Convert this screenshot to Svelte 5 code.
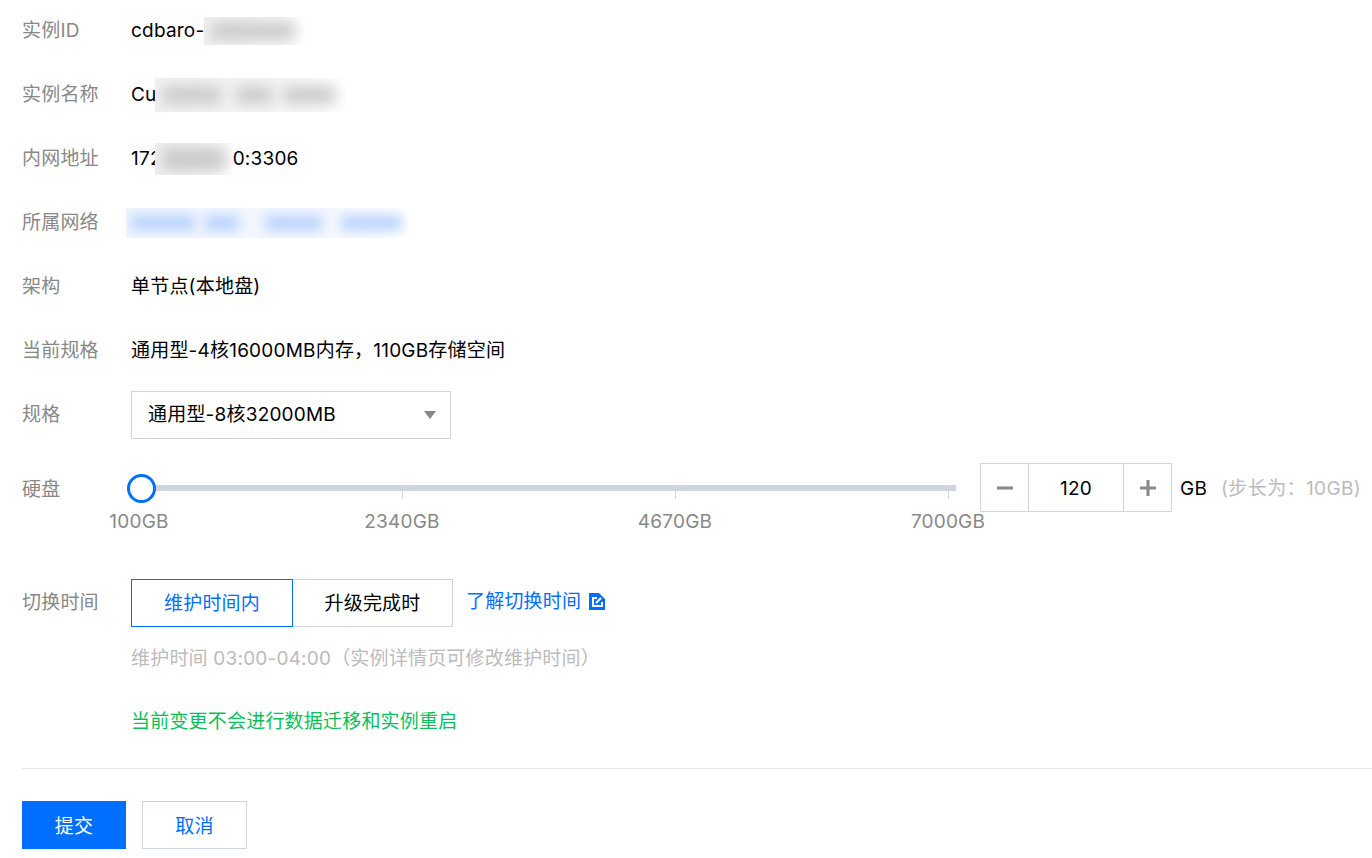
<script>
  let disk = $state(120);
  let when = $state('window');
  const marks = ['100GB', '2340GB', '4670GB', '7000GB'];
</script>

<div class="page">
  <div class="rows">
    <div class="row">
      <span class="label">实例ID</span>
      <span class="value">cdbaro-<span class="redact r-id"><i></i></span></span>
    </div>
    <div class="row">
      <span class="label">实例名称</span>
      <span class="value">Cu<span class="redact r-name"><i></i><i></i><i></i></span></span>
    </div>
    <div class="row">
      <span class="label">内网地址</span>
      <span class="value">172<span class="redact r-ip"><i></i></span>0:3306</span>
    </div>
    <div class="row">
      <span class="label">所属网络</span>
      <span class="value"><span class="redact r-net"><i></i><i></i><i></i><i></i></span></span>
    </div>
    <div class="row">
      <span class="label">架构</span>
      <span class="value">单节点(本地盘)</span>
    </div>
    <div class="row">
      <span class="label">当前规格</span>
      <span class="value">通用型-4核16000MB内存，110GB存储空间</span>
    </div>
  </div>

  <div class="row spec">
    <span class="label">规格</span>
    <div class="select">
      <span>通用型-8核32000MB</span>
      <span class="caret"></span>
    </div>
  </div>

  <div class="row disk">
    <span class="label">硬盘</span>
    <div class="slider">
      <div class="track">
        <span class="thumb"></span>
        <span class="tick"></span>
        <span class="tick"></span>
        <span class="tick"></span>
      </div>
      <div class="marks">
        {#each marks as m}
          <span class="mark"><span>{m}</span></span>
        {/each}
      </div>
    </div>
    <div class="stepper">
      <button class="step" aria-label="减少" onclick={() => (disk -= 10)}>
        <svg width="18" height="18" viewBox="0 0 18 18"><rect x="1" y="7.5" width="16" height="3" fill="#888" /></svg>
      </button>
      <span class="num">{disk}</span>
      <button class="step" aria-label="增加" onclick={() => (disk += 10)}>
        <svg width="18" height="18" viewBox="0 0 18 18"><path d="M1 7.5h6.5V1h3v6.5H17v3h-6.5V17h-3v-6.5H1z" fill="#888" /></svg>
      </button>
    </div>
    <span class="unit">GB</span>
    <span class="step-hint">(步长为：10GB)</span>
  </div>

  <div class="row switch">
    <span class="label">切换时间</span>
    <div class="seg">
      <button class:on={when === 'window'} onclick={() => (when = 'window')}>维护时间内</button>
      <button class:on={when === 'done'} onclick={() => (when = 'done')}>升级完成时</button>
    </div>
    <a class="link" href="#switch">了解切换时间
      <svg width="16" height="17" viewBox="0 0 16 17">
        <path d="M0 0h16v17H0z" fill="#006eff" />
        <path d="M8 5H4v8h9V9" fill="none" stroke="#fff" stroke-width="2" />
        <path d="M7 10 12 5" fill="none" stroke="#fff" stroke-width="2.2" />
        <path d="M10 0h6v6z" fill="#fff" />
      </svg>
    </a>
  </div>
  <p class="hint">维护时间 03:00-04:00（实例详情页可修改维护时间）</p>
  <p class="ok">当前变更不会进行数据迁移和实例重启</p>

  <div class="footer">
    <button class="btn primary">提交</button>
    <button class="btn">取消</button>
  </div>
</div>

<style>
  :global(body) {
    background: #fff;
    overflow: hidden;
  }

  .page {
    height: 858px;
    box-sizing: border-box;
    padding: 17px 0 0 22px;
    font-family: Inter, "Noto Sans CJK SC", sans-serif;
    font-size: 19px;
    line-height: 28px;
    letter-spacing: 0.2px;
    color: #000;
  }

  .rows {
    display: flex;
    flex-direction: column;
    gap: 36px;
  }

  .row {
    display: flex;
    align-items: center;
  }

  .label {
    flex: none;
    width: 109px;
    color: #888;
  }

  .value {
    display: flex;
    align-items: center;
    height: 28px;
    white-space: nowrap;
  }

  .redact {
    display: flex;
    align-items: center;
    overflow: hidden;
    background: linear-gradient(90deg, #f1f1f1, #f6f6f6 60%, #fff);
    flex: none;
    box-sizing: border-box;
  }

  .redact i {
    display: block;
    height: 18px;
    background: #cbcbcb;
    filter: blur(7px);
    flex: none;
  }

  .r-id {
    width: 101px;
    height: 28px;
    padding-left: 7px;
  }
  .r-id i { width: 84px; }

  .r-name {
    width: 191px;
    height: 34px;
    margin-left: -2px;
    padding-left: 8px;
  }
  .r-name i:nth-child(1) { width: 58px; margin-right: 15px; }
  .r-name i:nth-child(2) { width: 36px; margin-right: 11px; }
  .r-name i:nth-child(3) { width: 52px; }

  .r-ip {
    width: 78px;
    height: 32px;
    margin-left: -7px;
    padding-left: 7px;
  }
  .r-ip i { width: 64px; height: 24px; }

  .r-net {
    width: 282px;
    height: 30px;
    margin-left: -5px;
    padding-left: 5px;
    background: linear-gradient(90deg, #f1f6ff, #f5f8ff 70%, #fff);
  }
  .r-net i { background: #bcd4fd; height: 16px; filter: blur(6px); }
  .r-net i:nth-child(1) { width: 64px; margin-right: 10px; }
  .r-net i:nth-child(2) { width: 34px; margin-right: 26px; }
  .r-net i:nth-child(3) { width: 57px; margin-right: 19px; }
  .r-net i:nth-child(4) { width: 61px; }

  .spec {
    margin-top: 26px;
  }

  .select {
    display: flex;
    align-items: center;
    justify-content: space-between;
    width: 320px;
    height: 48px;
    box-sizing: border-box;
    padding: 0 14px 0 16px;
    border: 1px solid #cfd5de;
  }

  .caret {
    width: 0;
    height: 0;
    border-left: 6.5px solid transparent;
    border-right: 6.5px solid transparent;
    border-top: 8px solid #888;
  }

  .disk {
    margin-top: 24px;
    align-items: flex-start;
  }

  .disk .label {
    margin-top: 13px;
  }

  .slider {
    flex: none;
    width: 849px;
    margin-top: 22px;
  }

  .track {
    position: relative;
    width: 825px;
    height: 6px;
    background: #cfd5de;
    display: grid;
    grid-template-columns: repeat(3, 273px);
  }

  .thumb {
    position: absolute;
    left: -4px;
    top: -11px;
    width: 29px;
    height: 29px;
    box-sizing: border-box;
    border: 3px solid #006eff;
    border-radius: 50%;
    background: #fff;
  }

  .tick {
    justify-self: end;
    width: 1px;
    height: 8px;
    margin-top: 6px;
    background: #cfd5de;
    transform: translateX(-1px);
  }

  .marks {
    display: grid;
    grid-template-columns: 10px repeat(3, 273px);
    margin: 17px 0 0 -2px;
    font-size: 19px;
    line-height: 28px;
    color: #888;
  }

  .mark {
    display: flex;
    width: 0;
    justify-content: center;
    white-space: nowrap;
  }

  .mark:first-child {
    grid-column: 1 / 2;
    margin-left: 10px;
  }

  .marks .mark:nth-child(2) { grid-column: 2; margin-left: 263px; }
  .marks .mark:nth-child(3) { grid-column: 3; margin-left: 263px; }
  .marks .mark:nth-child(4) { grid-column: 4; margin-left: 263px; }

  .stepper {
    display: flex;
    flex: none;
    align-items: stretch;
    height: 49px;
    box-sizing: border-box;
    border: 1px solid #cfd5de;
  }

  .step {
    width: 47px;
    padding: 0;
    border: 0;
    background: #fff;
    display: flex;
    align-items: center;
    justify-content: center;
  }

  .num {
    width: 94px;
    text-align: center;
    line-height: 49px;
    border-left: 1px solid #cfd5de;
    border-right: 1px solid #cfd5de;
  }

  .unit {
    margin: 11px 0 0 8px;
    line-height: 30px;
  }

  .step-hint {
    margin: 11px 0 0 14px;
    line-height: 30px;
    letter-spacing: 0.4px;
    color: #bbb;
    white-space: nowrap;
  }

  .switch {
    margin-top: 43px;
  }

  .seg {
    display: flex;
    flex: none;
  }

  .seg button {
    height: 48px;
    width: 161px;
    box-sizing: border-box;
    border: 1px solid #cfd5de;
    background: #fff;
    font: inherit;
    letter-spacing: inherit;
    color: #000;
    padding: 1px 0 0;
  }

  .seg button + button {
    margin-left: -1px;
  }

  .seg button.on {
    position: relative;
    width: 162px;
    border-color: #006eff;
    color: #006eff;
  }

  .link {
    display: flex;
    align-items: center;
    gap: 8px;
    margin: -3px 0 0 13px;
    color: #006eff;
    text-decoration: none;
  }

  .hint {
    margin: 18px 0 0 109px;
    color: #bbb;
  }

  .ok {
    margin: 35px 0 0 109px;
    color: #0abf5b;
  }

  .footer {
    display: flex;
    gap: 16px;
    margin-top: 32px;
    padding-top: 32px;
    border-top: 1px solid #e5e8ed;
  }

  .btn {
    width: 105px;
    height: 48px;
    padding: 3px 0 0;
    box-sizing: border-box;
    border: 1px solid #cfd5de;
    background: #fff;
    color: #006eff;
    font: inherit;
    letter-spacing: inherit;
  }

  .primary {
    width: 104px;
    background: #006eff;
    border-color: #006eff;
    color: #fff;
  }
</style>
